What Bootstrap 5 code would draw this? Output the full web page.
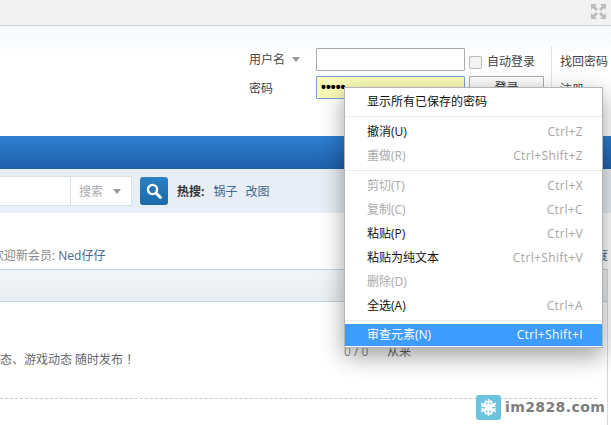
<!DOCTYPE html>
<html lang="zh-CN">
<head>
<meta charset="utf-8">
<title>登录</title>
<link href="https://cdn.jsdelivr.net/npm/bootstrap@5.3.0/dist/css/bootstrap.min.css" rel="stylesheet">
<style>
html,body{height:425px;overflow:hidden}
body{width:611px;position:relative;background:#fff;font:12px/16px "Open Sans","Noto Sans CJK SC",sans-serif;color:#444}
a{color:#46688f;text-decoration:none}
.topstrip{height:26px;background:#f2f2f2;border-bottom:1px solid #ccc;padding:4px 5px 0 0}
.headzone{height:110px;background:linear-gradient(#f4f8fc,#fff 34px);padding:22px 4px 0 0}
.logingrid{display:grid;grid-template-columns:67px 149px 82px 60px;grid-template-rows:23px 23px;row-gap:5px;align-items:center;width:358px}
.labelfirst{padding-top:1px}
.labelsecond{padding-top:2px}
.fieldbox{width:149px;height:23px;border:1px solid #aaa;background:#fff;border-radius:1px}
.fieldfilled{background:#fbfbb8;border:1px solid #7a9fe0;color:#000;font:700 14px/21px "Liberation Sans",sans-serif;padding-left:4px}
.tinycaret{display:inline-block;border:4px solid transparent;border-top:5px solid #999;border-bottom:0;vertical-align:2px}
.labelfirst .tinycaret{margin-left:7px}
.searchpick .tinycaret{margin-left:10px}
.autocell{padding:5px 0 0 4px;gap:5px}
.fakecheck{width:13px;height:13px;border:1px solid #bbb;border-radius:2px;background:#f3f3f3}
.loginbtn{width:75px;height:23px;margin-left:4px;border:1px solid #aaa;background:linear-gradient(#fff,#ececec);border-radius:1px;line-height:21px;text-align:center;color:#333}
.sidecell{border-left:1px solid #e3e3e3;margin-left:4px;padding:3px 0 0 8px;height:28px;line-height:26px;white-space:nowrap}
.bluebar{height:33px;background:linear-gradient(#2f80d3,#1e5fa9)}
.searchzone{height:44px;background:#e8eef5}
.searchbox{width:132px;height:30px;background:#fff;border:1px solid #d8e0e8;border-left:0;justify-content:flex-end}
.searchpick{width:61px;border-left:1px solid #d8dfe6;color:#aaa;padding:1px 0 0 8px;line-height:28px}
.searchgo{width:28px;height:28px;margin-left:8px;background:linear-gradient(#2a82c4,#1c69a8);border-radius:3px}
.hotlabel{margin-left:9px;padding-top:1px;font-weight:700;color:#333}
.hotlinks{margin-left:9px;padding-top:1px;gap:8px}
.welcomeline{height:56px;width:608px;padding-top:35px;white-space:nowrap;color:#888}
.welcomeline span{margin-left:-8px}
.bandrow{height:33px;background:linear-gradient(#f3f6f8,#e9eef2);border-top:1px solid #c2d5e3;border-bottom:1px solid #c2d5e3;width:608px;border-right:1px solid #d8d8d8}
.forumrow{height:96px;width:608px;border-right:1px solid #d8d8d8;white-space:nowrap;padding-top:50px;position:relative;background:#fff}
.forumtail{margin-left:-36px;color:#666;display:block}
.statcol{position:absolute;left:344px;top:42px;color:#888}
.statlast{position:absolute;left:387px;top:42px;color:#666}
.restzone{width:608px;height:27px;border-right:1px solid #d8d8d8}
.dashline{width:597px;border-top:1px dashed #c8c8c8}
.ctxmenu.dropdown-menu{left:344px;top:87px;width:259px;height:261px;padding:2px 0 0;margin:0;border:1px solid #b5b5b5;border-radius:0;box-shadow:0 8px 22px rgba(0,0,0,.38);font-size:12px;--bs-dropdown-divider-bg:#e9e9e9}
.ctxmenu .dropdown-item{height:24px;line-height:24px;padding:0 19px 0 22px;color:#111;font-size:12px;display:flex;justify-content:space-between}
.ctxmenu .dropdown-item em{font-style:normal;color:#a6a6a6;letter-spacing:.35px}
.ctxmenu .dropdown-item.muted{color:#aaa}
.ctxmenu .dropdown-divider{margin:2px 0 3px;opacity:1}
.ctxmenu .dropdown-item.picked{background:#3e9cff;color:#fff;height:22px;line-height:22px;margin-top:1px}
.ctxmenu .dropdown-item.picked em{color:#fff}
.stampmark{position:absolute;left:476px;top:395px;gap:4px}
.stampicon{width:25px;height:25px;border-radius:3px;background:#6cc3df}
.stamptext{font:700 14px/25px "DejaVu Sans",sans-serif;color:#7d7d7d;letter-spacing:.4px}
</style>
</head>
<body>
<div class="topstrip d-flex justify-content-end">
  <svg width="15" height="15" viewBox="0 0 15 15" fill="#bdbdbd" aria-hidden="true"><path d="M0 0h6L4 2l3 3-2 2-3-3-2 2zM15 0v6l-2-2-3 3-2-2 3-3-2-2zM0 15V9l2 2 3-3 2 2-3 3 2 2zM15 15H9l2-2-3-3 2-2 3 3 2-2z"/></svg>
</div>
<div class="headzone d-flex justify-content-end">
  <div class="logingrid">
    <div class="labelfirst">用户名<i class="tinycaret"></i></div>
    <div class="fieldbox"></div>
    <div class="autocell d-flex align-items-center"><span class="fakecheck"></span><span class="text-nowrap">自动登录</span></div>
    <div class="sidecell">找回密码</div>
    <div class="labelsecond">密码</div>
    <div class="fieldbox fieldfilled">•••••</div>
    <div class="loginbtn">登录</div>
    <div class="sidecell">注册</div>
  </div>
</div>
<div class="bluebar"></div>
<div class="searchzone d-flex align-items-center">
  <div class="searchbox d-flex">
    <div class="searchpick">搜索<i class="tinycaret"></i></div>
  </div>
  <div class="searchgo d-flex align-items-center justify-content-center">
    <svg width="18" height="18" viewBox="0 0 18 18" fill="none" stroke="#fff" aria-hidden="true"><circle cx="7.5" cy="7.5" r="4.6" stroke-width="2.4"/><path d="M11 11l4.5 4.5" stroke-width="3" stroke-linecap="round"/></svg>
  </div>
  <div class="hotlabel">热搜:</div>
  <div class="hotlinks d-flex"><a href="#">锅子</a><a href="#">改图</a></div>
</div>
<div class="welcomeline d-flex justify-content-between"><span>欢迎新会员: <a href="#">Ned仔仔</a></span><a href="#">度</a></div>
<div class="bandrow"></div>
<div class="forumrow">
  <span class="forumtail">官方动态、游戏动态 随时发布 ！</span>
  <span class="statcol">0 / 0</span>
  <span class="statlast">从来</span>
</div>
<div class="restzone"><div class="dashline"></div></div>

<div class="dropdown-menu show ctxmenu">
  <a class="dropdown-item" href="#">显示所有已保存的密码</a>
  <hr class="dropdown-divider">
  <a class="dropdown-item" href="#">撤消(U)<em>Ctrl+Z</em></a>
  <a class="dropdown-item muted" href="#">重做(R)<em>Ctrl+Shift+Z</em></a>
  <hr class="dropdown-divider">
  <a class="dropdown-item muted" href="#">剪切(T)<em>Ctrl+X</em></a>
  <a class="dropdown-item muted" href="#">复制(C)<em>Ctrl+C</em></a>
  <a class="dropdown-item" href="#">粘贴(P)<em>Ctrl+V</em></a>
  <a class="dropdown-item" href="#">粘贴为纯文本<em>Ctrl+Shift+V</em></a>
  <a class="dropdown-item muted" href="#">删除(D)</a>
  <a class="dropdown-item" href="#">全选(A)<em>Ctrl+A</em></a>
  <hr class="dropdown-divider">
  <a class="dropdown-item picked" href="#">审查元素(N)<em>Ctrl+Shift+I</em></a>
</div>

<div class="stampmark d-flex align-items-center">
  <div class="stampicon d-flex align-items-center justify-content-center">
    <svg width="21" height="21" viewBox="0 0 21 21" fill="none" stroke="#fff" stroke-width="1.6" aria-hidden="true"><path d="M10.5 2v17M7.5 3.5l3 2.5 3-2.5M7.5 17.5l3-2.5 3 2.5M3.1 6.2l14.8 8.6M3.4 9.5l3.5-1.3.6-3.7M13.5 16.5l.6-3.7 3.5-1.3M3.1 14.8l14.8-8.6M3.4 11.5l3.5 1.3.6 3.7M13.5 4.5l.6 3.7 3.5 1.3"/><circle cx="10.5" cy="10.5" r="3" fill="#fff"/></svg>
  </div>
  <div class="stamptext">im2828.com</div>
</div>
</body>
</html>
